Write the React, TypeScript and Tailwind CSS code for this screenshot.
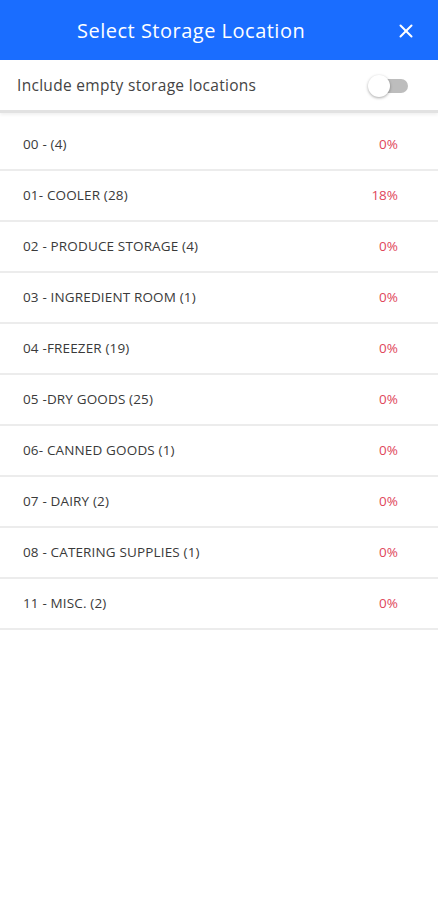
import { X } from 'lucide-react';

const LOCATIONS = [
  { name: '00 - (4)', pct: '0%' },
  { name: '01- COOLER (28)', pct: '18%' },
  { name: '02 - PRODUCE STORAGE (4)', pct: '0%' },
  { name: '03 - INGREDIENT ROOM (1)', pct: '0%' },
  { name: '04 -FREEZER (19)', pct: '0%' },
  { name: '05 -DRY GOODS (25)', pct: '0%' },
  { name: '06- CANNED GOODS (1)', pct: '0%' },
  { name: '07 - DAIRY (2)', pct: '0%' },
  { name: '08 - CATERING SUPPLIES (1)', pct: '0%' },
  { name: '11 - MISC. (2)', pct: '0%' },
];

export default function App() {
  return (
    <div className="min-h-[900px] w-full bg-white font-['Open_Sans','Noto_Sans',sans-serif]">
      <div className="flex h-[60px] items-center bg-[#1a6dff] pl-[77px] pr-[21px] pt-[2px]">
        <h1 className="flex-1 text-[20px] tracking-[0.5px] text-white">Select Storage Location</h1>
        <X className="h-[22px] w-[22px] text-white" strokeWidth={2.2} />
      </div>

      <div className="flex h-[53px] items-center justify-between border-b-[3px] border-[#e2e2e2] pl-[17px] pr-[30px] pt-[2px] shadow-[0_2px_3px_rgba(0,0,0,0.06)]">
        <span className="text-[15.5px] tracking-[0.3px] text-[#444]">Include empty storage locations</span>
        <div className="relative h-[14px] w-[32px] rounded-full bg-[#bdbdbd]">
          <div className="absolute -left-[8px] -top-[4px] h-[22px] w-[22px] rounded-full bg-white shadow-[0_1px_3px_rgba(0,0,0,0.35)]" />
        </div>
      </div>

      <ul className="pt-[7px]">
        {LOCATIONS.map((loc) => (
          <li
            key={loc.name}
            className="flex h-[51px] items-center justify-between border-b-2 border-[#ececec] pl-[23px] pr-[40px]"
          >
            <span className="text-[13.5px] tracking-[0.15px] text-[#3a3a3a]">{loc.name}</span>
            <span className="text-[13.5px] text-[#e0475b]">{loc.pct}</span>
          </li>
        ))}
      </ul>
    </div>
  );
}
